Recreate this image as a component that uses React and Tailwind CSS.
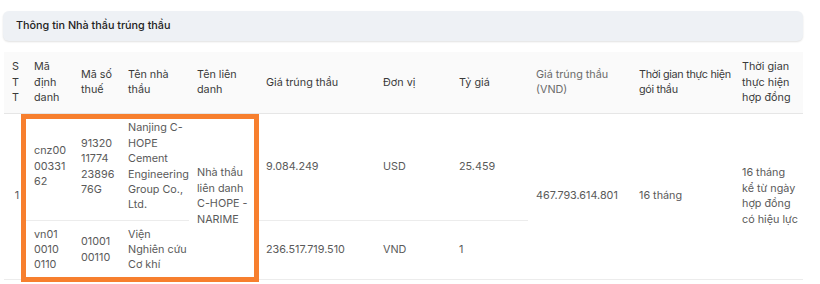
import React from "react";

const headers = [
    { label: ["S", "T", "T"], w: "w-[22px]" },
    { label: "Mã định danh", w: "w-[47px]" },
    { label: "Mã số thuế", w: "w-[47px]" },
    { label: "Tên nhà thầu", w: "w-[69px]" },
    { label: "Tên liên danh", w: "w-[69px]" },
    { label: "Giá trúng thầu", w: "w-[117px]" },
    { label: "Đơn vị", w: "w-[76px]" },
    { label: "Tỷ giá", w: "w-[77px]" },
    { label: "Giá trúng thầu (VND)", w: "w-[103px]", light: true },
    { label: ["Thời gian thực hiện", "gói thầu"], w: "w-[103px] tracking-[-0.3px]" },
    { label: "Thời gian thực hiện hợp đồng", w: "w-[69px]" },
];

// lines broken by hand, the ids have no spaces to wrap on
const Lines = ({ lines }) => (
    <>
        {lines.map((l, i) => (
            <span key={i} className="block whitespace-nowrap">{l}</span>
        ))}
    </>
);

const td = "pl-[8px] pr-[4px] py-[6px] align-middle";
const rowLine = "border-b border-[#ececec]";

const App = () => {
    return (
        <div className="w-[820px] h-[284px] bg-white px-[3px] pt-[11px] text-[10.8px] leading-[15.4px] overflow-hidden" style={{ fontFamily: "Inter, 'Noto Sans', sans-serif" }}>
            {/* section title */}
            <div className="w-[800px] h-[30px] flex items-center px-[13px] rounded-md bg-[#eef1f5] shadow-[0_1px_2px_rgba(0,0,0,0.12)]">
                <span className="font-medium text-[#222]">Thông tin Nhà thầu trúng thầu</span>
            </div>

            <div className="relative mt-[11px] ml-[1px] w-[799px]">
                <table className="table-fixed w-[799px] border-collapse text-left">
                    <thead>
                        <tr className="h-[61px] bg-[#fafafa] border-b border-[#e6e6e6]">
                            {headers.map((h, i) => (
                                <th
                                    key={i}
                                    className={`${h.w} ${td} font-normal ${h.light ? "text-[#6b6b6b]" : "text-[#3a3a3a]"}`}
                                >
                                    {Array.isArray(h.label) ? <Lines lines={h.label} /> : h.label}
                                </th>
                            ))}
                        </tr>
                    </thead>
                    <tbody className="text-[#5a5a5a]">
                        <tr className="h-[107px]">
                            <td rowSpan={2} className={`${td} pl-0 pr-0 text-center border-b border-[#ececec]`}>1</td>
                            <td className={`${td} ${rowLine}`}>
                                <Lines lines={["cnz00", "00331", "62"]} />
                            </td>
                            <td className={`${td} ${rowLine}`}>
                                <Lines lines={["91320", "11774", "23896", "76G"]} />
                            </td>
                            <td className={`${td} ${rowLine}`}>Nanjing C-HOPE Cement Engineering Group Co., Ltd.</td>
                            <td rowSpan={2} className={`${td} border-b border-[#ececec]`}>Nhà thầu liên danh C-HOPE - NARIME</td>
                            <td className={`${td} ${rowLine}`}>9.084.249</td>
                            <td className={`${td} ${rowLine}`}>USD</td>
                            <td className={`${td} ${rowLine}`}>25.459</td>
                            <td rowSpan={2} className={`${td} border-b border-[#ececec]`}>467.793.614.801</td>
                            <td rowSpan={2} className={`${td} border-b border-[#ececec]`}>16 tháng</td>
                            <td rowSpan={2} className={`${td} border-b border-[#ececec]`}>16 tháng kể từ ngày hợp đồng có hiệu lực</td>
                        </tr>
                        <tr className="h-[58px]">
                            <td className={`${td} ${rowLine}`}>
                                <Lines lines={["vn01", "0010", "0110"]} />
                            </td>
                            <td className={`${td} ${rowLine}`}>
                                <Lines lines={["01001", "00110"]} />
                            </td>
                            <td className={`${td} ${rowLine}`}>
                                <Lines lines={["Viện", "Nghiên cứu", "Cơ khí"]} />
                            </td>
                            <td className={`${td} ${rowLine}`}>236.517.719.510</td>
                            <td className={`${td} ${rowLine}`}>VND</td>
                            <td className={`${td} ${rowLine}`}>1</td>
                        </tr>
                    </tbody>
                </table>

                {/* highlight drawn over the joint-venture rows */}
                <div className="absolute left-[17px] top-[62px] w-[238px] h-[168px] border-[5px] border-[#f77f2e] pointer-events-none" />
            </div>
        </div>
    );
};

export default App;
